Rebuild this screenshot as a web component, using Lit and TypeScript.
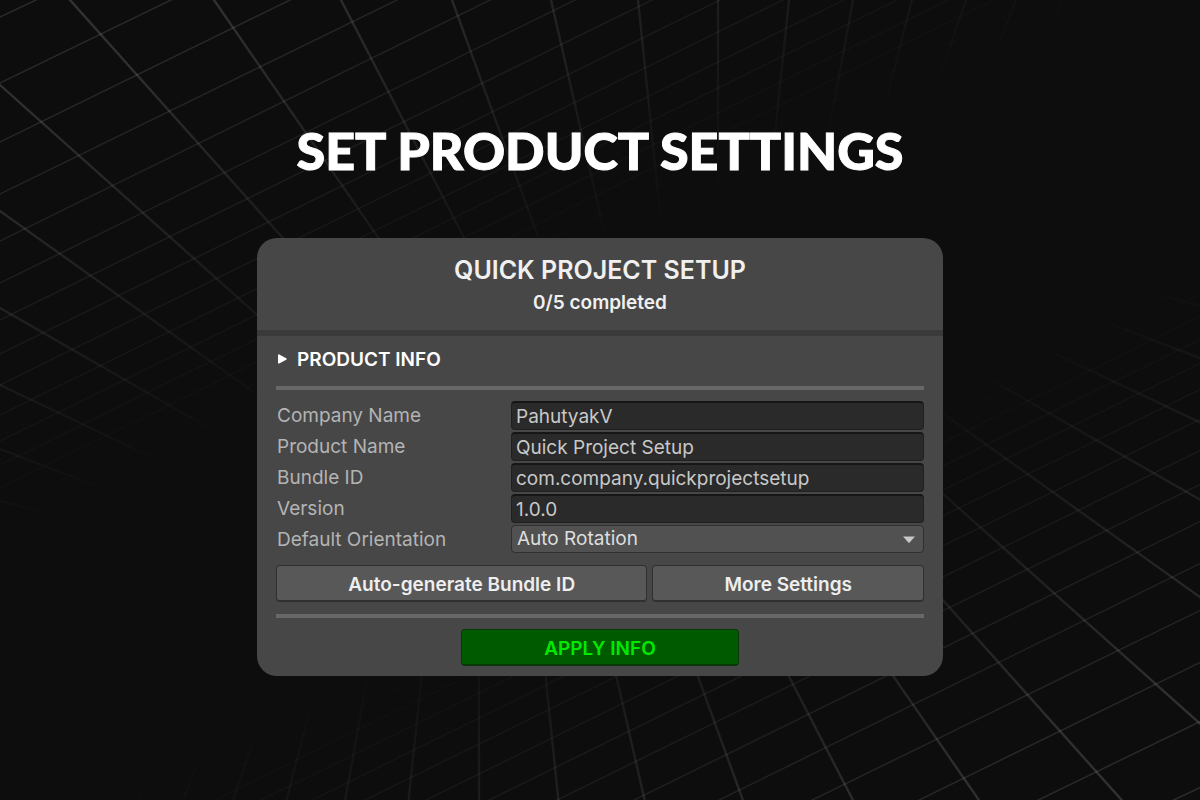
import { LitElement, html, css, svg } from "lit";
import { customElement, property, state } from "lit/decorators.js";

/** Far family: straight lines rising to the right, as [left y, top x]. */
const RISING: [number, number][] = [
  [17, 36], [83, 171], [142, 290], [194, 397], [241, 490], [283, 575], [320, 652],
  [354, 720], [385, 783], [415, 844], [441, 897], [465, 948], [488, 994], [510, 1038],
];

/** Near family: thicker lines falling away from the corner, as x1, y1, x2, y2. */
const FALLING: [number, number, number, number][] = [
  [0, 501, 60, 517], [0, 449, 120, 495], [0, 385, 175, 468], [0, 308, 235, 443],
  [0, 211, 290, 418], [0, 85, 340, 389], [70, 0, 400, 369], [214, 0, 460, 356],
  [341, 0, 520, 346], [452, 0, 570, 325], [551, 0, 625, 323], [638, 0, 668, 290],
  [718, 0, 718, 230], [789, 0, 768, 200], [853, 0, 822, 170], [912, 0, 880, 125],
  [966, 0, 932, 100], [1016, 0, 985, 80], [1061, 0, 1036, 60], [1105, 0, 1060, 80],
];

/** Extends a segment backwards past the edge of the scene. */
const extend = ([x1, y1, x2, y2]: number[]) => {
  const k = 20 / Math.hypot(x2 - x1, y2 - y1);
  return [x1 - (x2 - x1) * k, y1 - (y2 - y1) * k, x2, y2];
};

@customElement("grid-backdrop")
export class GridBackdrop extends LitElement {
  static styles = css`
    :host {
      display: block;
    }
    .scene {
      display: block;
      width: 100%;
      height: 100%;
    }
    .thin {
      stroke: #fff;
      stroke-opacity: 0.13;
      stroke-width: 1.5;
    }
    .thick {
      stroke: #fff;
      stroke-opacity: 0.16;
      stroke-width: 2.4;
    }
  `;

  render() {
    return html`
      <svg class="scene" viewBox="0 0 1200 800" preserveAspectRatio="xMidYMid slice" aria-hidden="true">
        <defs>
          <linearGradient id="fade" gradientUnits="userSpaceOnUse" x1="0" y1="0" x2="221" y2="451">
            <stop offset="0" stop-color="#fff" />
            <stop offset="0.25" stop-color="#ddd" />
            <stop offset="1" stop-color="#000" />
          </linearGradient>
          <mask id="reach" maskUnits="userSpaceOnUse" x="-20" y="-20" width="1240" height="840">
            <rect x="-20" y="-20" width="1240" height="840" fill="url(#fade)" />
          </mask>
          <g id="plane" mask="url(#reach)" fill="none">
            ${RISING.map(([y, x]) => {
              const m = y / x;
              return svg`<line class="thin" x1="-20" y1=${y + 20 * m} x2=${x + 20} y2=${-20 * m} />`;
            })}
            ${FALLING.map((l) => {
              const [x1, y1, x2, y2] = extend(l);
              return svg`<line class="thick" x1=${x1} y1=${y1} x2=${x2} y2=${y2} />`;
            })}
          </g>
        </defs>
        <use href="#plane" />
        <use href="#plane" transform="translate(1197 806) rotate(180)" />
      </svg>
    `;
  }
}

@customElement("setup-panel")
export class SetupPanel extends LitElement {
  @property({ type: Number }) completed = 0;
  @property({ type: Number }) total = 5;
  @state() private company = "PahutyakV";
  @state() private product = "Quick Project Setup";
  @state() private bundle = "com.company.quickprojectsetup";
  @state() private version = "1.0.0";

  static styles = css`
    :host {
      display: block;
      font-family: Inter, "Liberation Sans", sans-serif;
      font-size: 19px;
      line-height: 24px;
      color: #f0f0f0;
    }
    .panel {
      background: #474747;
      border-radius: 20px;
      overflow: hidden;
    }
    .head {
      padding: 17px 20px 15px;
      border-bottom: 6px solid #3a3a3a;
      text-align: center;
    }
    .name {
      margin: 0;
      font-size: 25px;
      line-height: 30px;
      font-weight: 600;
    }
    .progress {
      margin: 6px 0 0;
      font-weight: 600;
    }
    .body {
      padding: 0 19px 10px;
    }
    .section {
      margin: 0;
      padding: 9px 0 11px;
    }
    .toggle {
      display: flex;
      align-items: center;
      gap: 10px;
      height: 30px;
      padding: 0 2px;
      border: 0;
      background: none;
      color: #fff;
      font: 600 19px/24px Inter, "Liberation Sans", sans-serif;
    }
    .marker {
      width: 9px;
      height: 10px;
      margin-bottom: 2px;
      fill: #fff;
    }
    .rule {
      height: 4px;
      margin: 0;
      border: 0;
      background: #686868;
    }
    .fields {
      display: grid;
      grid-template-columns: 235px 1fr;
      grid-auto-rows: 30px;
      row-gap: 1px;
      padding: 11px 0 10px;
    }
    .label {
      padding: 3px 1px;
      color: #b4b4b4;
    }
    .text {
      box-sizing: border-box;
      width: 100%;
      height: 29px;
      min-width: 0;
      padding: 1px 4px 0;
      border: 1px solid #202020;
      border-top: 2px solid #161616;
      border-radius: 4px;
      background: #2a2a2a;
      color: #c8c8c8;
      font: 400 19px/24px Inter, "Liberation Sans", sans-serif;
    }
    .choice {
      display: grid;
      align-items: center;
      height: 28px;
    }
    .select {
      grid-area: 1 / 1;
      appearance: none;
      box-sizing: border-box;
      width: 100%;
      height: 28px;
      padding: 0 28px 0 5px;
      border: 1px solid #303030;
      border-radius: 4px;
      background: #515151;
      color: #dedede;
      font: 400 19px/24px Inter, "Liberation Sans", sans-serif;
    }
    .caret {
      grid-area: 1 / 1;
      justify-self: end;
      width: 12px;
      height: 7px;
      margin-right: 9px;
      fill: #c8c8c8;
      pointer-events: none;
    }
    .actions {
      display: grid;
      grid-template-columns: 372fr 272fr;
      gap: 5px;
      padding-bottom: 12px;
    }
    .button {
      height: 37px;
      padding: 3px 12px 0;
      border: 1px solid #303030;
      border-bottom-width: 2px;
      border-radius: 4px;
      background: #585858;
      color: #eee;
      font: 600 19px/24px Inter, "Liberation Sans", sans-serif;
    }
    .apply {
      display: block;
      width: 43%;
      margin: 11px auto 0;
      border-color: #0a360a;
      background: #005a00;
      color: #00ea00;
    }
  `;

  private textRow(id: string, label: string, value: string) {
    return html`
      <label class="label" for=${id}>${label}</label>
      <input class="text" id=${id} type="text" spellcheck="false" .value=${value} />
    `;
  }

  render() {
    return html`
      <section class="panel">
        <header class="head">
          <h2 class="name">QUICK PROJECT SETUP</h2>
          <p class="progress">${this.completed}/${this.total} completed</p>
        </header>
        <div class="body">
          <h3 class="section">
            <button class="toggle" type="button">
              <svg class="marker" viewBox="0 0 9 10" aria-hidden="true">
                <path d="M0 1.2Q0 0 1.2 .5L8.2 4.2Q9.4 5 8.2 5.7L1.2 9.4Q0 9.9 0 8.8Z" />
              </svg>
              PRODUCT INFO
            </button>
          </h3>
          <hr class="rule" />
          <div class="fields">
            ${this.textRow("company", "Company Name", this.company)}
            ${this.textRow("product", "Product Name", this.product)}
            ${this.textRow("bundle", "Bundle ID", this.bundle)}
            ${this.textRow("version", "Version", this.version)}
            <label class="label" for="orientation">Default Orientation</label>
            <div class="choice">
              <select class="select" id="orientation">
                <option>Auto Rotation</option>
              </select>
              <svg class="caret" viewBox="0 0 12 7" aria-hidden="true">
                <path d="M0 .5H12L6.6 6.6Q6 7.2 5.4 6.6Z" />
              </svg>
            </div>
          </div>
          <div class="actions">
            <button class="button" type="button">Auto-generate Bundle ID</button>
            <button class="button" type="button">More Settings</button>
          </div>
          <hr class="rule" />
          <button class="button apply" type="button">APPLY INFO</button>
        </div>
      </section>
    `;
  }
}

@customElement("app-root")
export class AppRoot extends LitElement {
  static styles = css`
    :host {
      display: block;
      background: #0d0d0d;
    }
    .page {
      position: relative;
      display: flex;
      flex-direction: column;
      align-items: center;
      justify-content: center;
      gap: 62px;
      box-sizing: border-box;
      min-height: 100vh;
      overflow: hidden;
    }
    .backdrop {
      position: absolute;
      inset: 0;
    }
    .title {
      position: relative;
      margin: 0;
      color: #fff;
      -webkit-text-stroke: 1px #fff;
      font-family: Lato, "Noto Sans", sans-serif;
      font-size: 52px;
      line-height: 52px;
      font-weight: 900;
      text-align: center;
    }
    .setup {
      position: relative;
      width: 100%;
      max-width: 686px;
    }
  `;

  render() {
    return html`
      <main class="page">
        <grid-backdrop class="backdrop"></grid-backdrop>
        <h1 class="title">SET PRODUCT SETTINGS</h1>
        <setup-panel class="setup"></setup-panel>
      </main>
    `;
  }
}
